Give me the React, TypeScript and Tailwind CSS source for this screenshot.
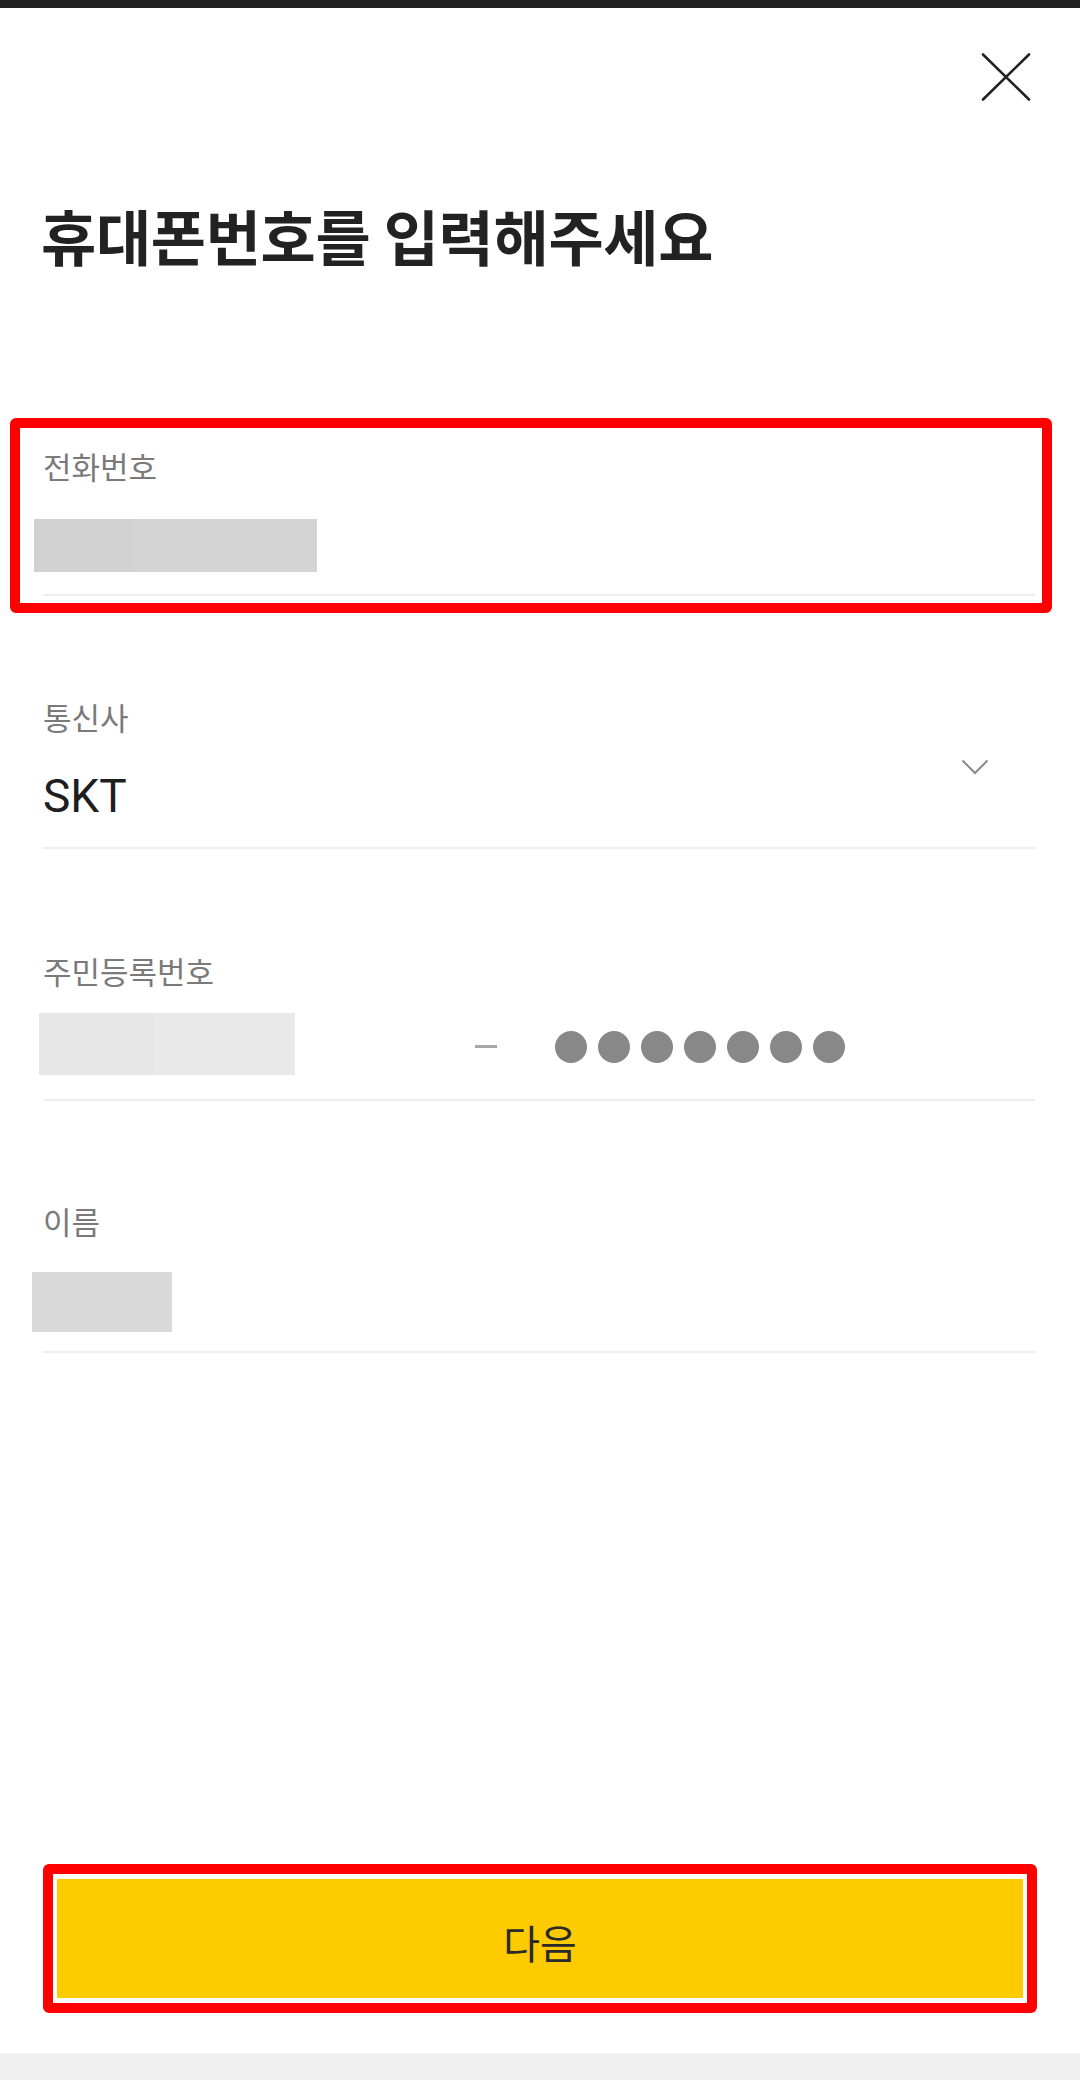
import React from "react";

const KR = "font-['Noto_Sans_CJK_KR','Noto_Sans',sans-serif]";

function Divider({ className = "" }: { className?: string }) {
  return <div className={`h-[2px] w-[992px] bg-[#eeeeee] ${className}`} />;
}

function Label({ children }: { children: React.ReactNode }) {
  return (
    <div className={`${KR} text-[31px] leading-none text-[#7a7a7a]`}>
      {children}
    </div>
  );
}

export default function App() {
  return (
    <div className={`${KR} flex min-h-[2080px] w-[1080px] flex-col bg-white`}>
      <div className="h-[8px] w-full bg-[#222222]" />

      {/* 닫기 */}
      <div className="flex justify-end pr-[49px] pt-[45px]">
        <button type="button" aria-label="닫기" className="h-[48px] w-[50px]">
          <svg width="50" height="48" viewBox="0 0 50 48" fill="none">
            <path
              d="M2 1.5 L48 46.5 M48 1.5 L2 46.5"
              stroke="#222222"
              strokeWidth="2.6"
              strokeLinecap="round"
            />
          </svg>
        </button>
      </div>

      <h1 className="ml-[41px] mt-[104px] text-[60px] font-bold leading-none tracking-[-0.3px] text-[#222222]">
        휴대폰번호를 입력해주세요
      </h1>

      {/* 전화번호 */}
      <div className="ml-[10px] mt-[153px] w-[1042px] rounded-[6px] border-[10px] border-[#ff0000] pb-[7px] pl-[23px] pt-[22px]">
        <Label>전화번호</Label>
        <div className="-ml-[9px] mt-[38px] flex h-[53px] w-[283px]">
          <div className="h-full w-[100px] bg-[#d2d2d2]" />
          <div className="h-full flex-1 bg-[#d4d4d4]" />
        </div>
        <Divider className="mt-[22px]" />
      </div>

      {/* 통신사 */}
      <div className="ml-[43px] mt-[88px]">
        <div className="flex w-[992px] items-start justify-between">
          <div>
            <Label>통신사</Label>
            <div className="mt-[41px] font-['Roboto',sans-serif] text-[46px] leading-none text-[#1e1e1e]">
              SKT
            </div>
          </div>
          <svg
            className="mr-[46px] mt-[58px]"
            width="28"
            height="16"
            viewBox="0 0 28 16"
            fill="none"
          >
            <path
              d="M1.5 1.5 L14 14 L26.5 1.5"
              stroke="#8a8a8a"
              strokeWidth="2"
            />
          </svg>
        </div>
        <Divider className="mt-[28px]" />
      </div>

      {/* 주민등록번호 */}
      <div className="ml-[43px] mt-[106px]">
        <Label>주민등록번호</Label>
        <div className="-ml-[4px] mt-[27px] flex items-start">
          <div className="flex h-[62px] w-[256px]">
            <div className="h-full w-[115px] bg-[#e7e7e7]" />
            <div className="h-full flex-1 bg-[#e9e9e9]" />
          </div>
          <div className="ml-[180px] mt-[32px] h-[3px] w-[22px] bg-[#a8a8a8]" />
          <div className="ml-[58px] mt-[18px] flex gap-[11px]">
            {Array.from({ length: 7 }).map((_, i) => (
              <span key={i} className="h-[32px] w-[32px] rounded-full bg-[#888888]" />
            ))}
          </div>
        </div>
        <Divider className="mt-[24px]" />
      </div>

      {/* 이름 */}
      <div className="ml-[43px] mt-[104px]">
        <Label>이름</Label>
        <div className="-ml-[11px] mt-[36px] h-[60px] w-[140px] bg-[#d9d9d9]" />
        <Divider className="mt-[19px]" />
      </div>

      <div className="flex-1" />

      {/* 다음 */}
      <div className="mb-[40px] ml-[43px] w-[994px] rounded-[6px] border-[10px] border-[#ff0000] bg-white px-[4px] py-[5px]">
        <button
          type="button"
          className="flex h-[119px] w-full items-center justify-center bg-[#fecb00] pt-[6px] text-[40px] leading-none text-[#2a2a2a]"
        >
          다음
        </button>
      </div>

      <div className="h-[27px] w-full bg-[#f0f0f0]" />
    </div>
  );
}
